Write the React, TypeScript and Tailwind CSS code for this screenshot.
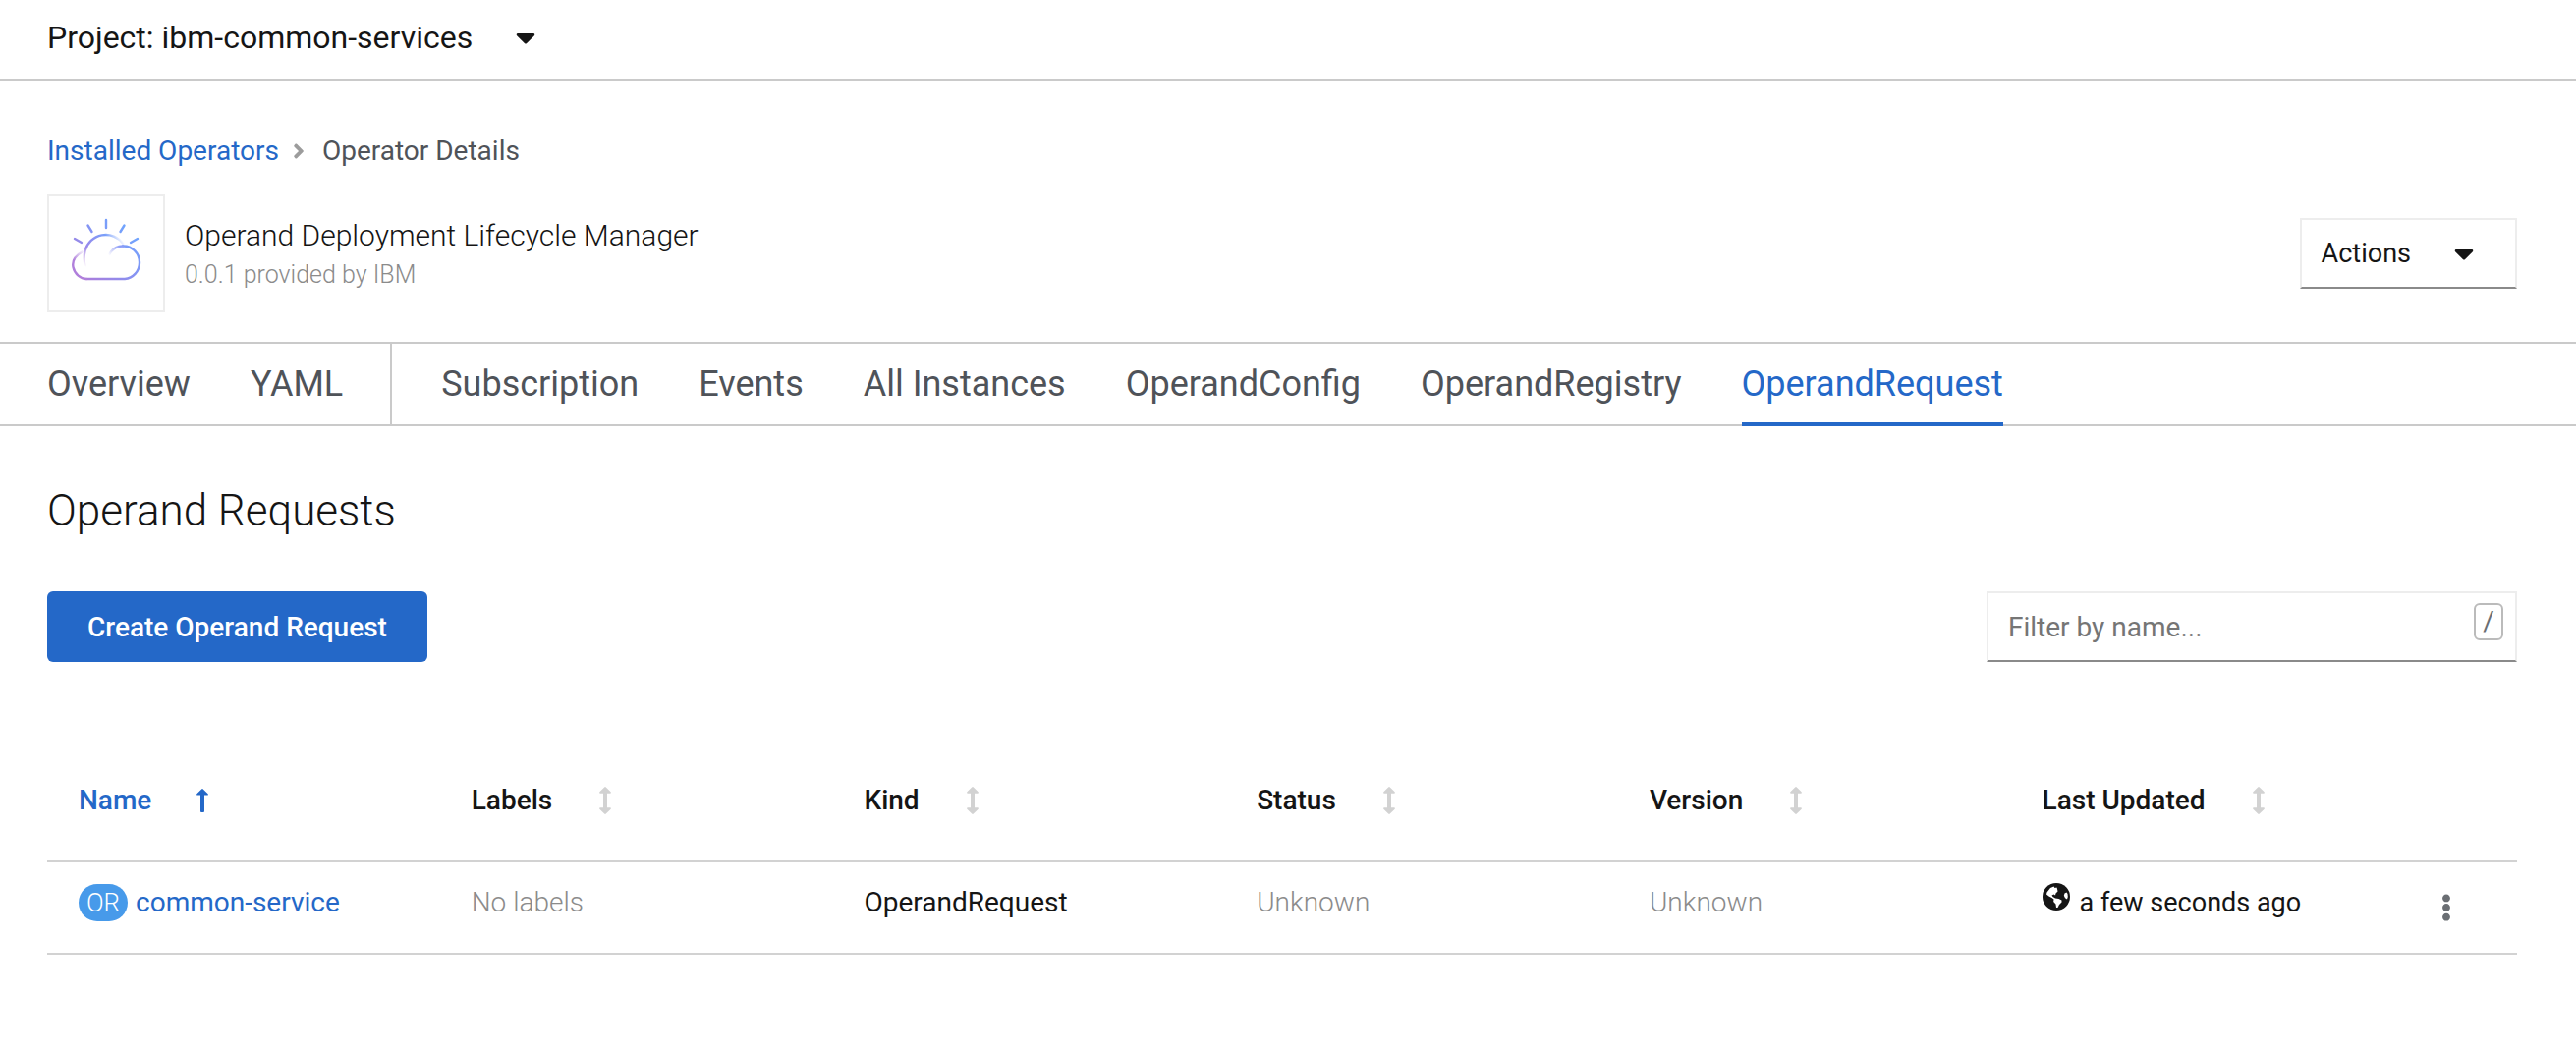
import { FaAngleRight, FaCaretDown, FaEllipsisV } from "react-icons/fa";

const primaryTabs = ["Overview", "YAML"];
const secondaryTabs = ["Subscription", "Events", "All Instances", "OperandConfig", "OperandRegistry", "OperandRequest"];
const sortableColumns = ["Labels", "Kind", "Status", "Version", "Last Updated"];

function CloudLogo() {
  return (
    <svg viewBox="0 0 72 64" className="h-16 w-18" fill="none" strokeWidth="2.4" strokeLinecap="round" aria-hidden="true">
      <defs>
        <linearGradient id="cloud" x1="8" y1="62" x2="60" y2="8" gradientUnits="userSpaceOnUse">
          <stop offset="0" stopColor="#b07ad8" />
          <stop offset="0.5" stopColor="#8a90f0" />
          <stop offset="1" stopColor="#6ea6ff" />
        </linearGradient>
        <linearGradient id="sun" x1="15" y1="50" x2="54" y2="24" gradientUnits="userSpaceOnUse">
          <stop offset="0" stopColor="#b07ad8" stopOpacity="0" />
          <stop offset="0.25" stopColor="#9a88ea" />
          <stop offset="0.75" stopColor="#7aa0fa" />
          <stop offset="1" stopColor="#7aa0fa" stopOpacity="0" />
        </linearGradient>
        <linearGradient id="front" x1="38" y1="37" x2="50" y2="28" gradientUnits="userSpaceOnUse">
          <stop offset="0" stopColor="#8a90f0" stopOpacity="0" />
          <stop offset="1" stopColor="#8a9cf8" />
        </linearGradient>
        <linearGradient id="back" x1="10" y1="34" x2="6" y2="44" gradientUnits="userSpaceOnUse">
          <stop offset="0" stopColor="#b088e0" stopOpacity="0.2" />
          <stop offset="1" stopColor="#b07fdb" />
        </linearGradient>
      </defs>
      <g stroke="url(#cloud)">
        <path d="M36 2v8M17.500 7.500l4 6.500M54.500 7.500l-4 6.500M4 21l7 4M68 21l-7 4" />
        <path d="M53 28.500A16.500 16.500 0 0 1 70 45.500A16.500 16.500 0 0 1 55 62H16" />
      </g>
      <path d="M14.500 48.500C13 43 13.500 38 14.500 33.500A22 22 0 0 1 53.500 26" stroke="url(#sun)" />
      <path d="M39 37.500C42 31.500 47 28.500 53 28.500" stroke="url(#front)" />
      <path d="M11.500 34.500C3.500 39 1.500 45 2.500 50C4 57 10 62 16 62" stroke="url(#back)" />
    </svg>
  );
}

function SortAscendingIcon() {
  return (
    <svg viewBox="0 0 12 28" className="h-7 w-3" fill="currentColor" aria-hidden="true">
      <path d="M5.200 2.400Q6 1.600 6.800 2.400L11.700 7.200Q12.300 8.500 11 8.500H8V25Q8 26 7 26H5Q4 26 4 25V8.500H1Q-.3 8.500 .3 7.200Z" />
    </svg>
  );
}

function SortIcon() {
  return (
    <svg viewBox="0 0 12 28" className="h-7 w-3 text-[#d2d2d2]" fill="currentColor" aria-hidden="true">
      <path d="M5.200 .4Q6 -.3 6.800 .4L11.700 5.200Q12.300 6.700 11 6.700H8V21.300H11Q12.300 21.300 11.700 22.800L6.800 27.600Q6 28.300 5.200 27.600L.3 22.800Q-.3 21.300 1 21.300H4V6.700H1Q-.3 6.700 .3 5.200Z" />
    </svg>
  );
}

function GlobeIcon() {
  return (
    <svg viewBox="0 0 28 28" className="size-7" aria-hidden="true">
      <circle cx="14" cy="14" r="14" fill="#151515" />
      <path
        fill="#ffffff"
        d="M11.500 3.500L8 5L4.500 9.500L4 11.500L6.500 13.500L9.500 15L11.500 16.500L11.200 19L13.500 21.500L14 25L15.500 25L17 22L19.500 19.500L19.500 17.500L16.500 16L13 15.500L10.500 14L9.500 12.500L11.500 11.500L13 12.500L13.500 10.500L15.500 8.500L15 6L14.500 4.500L12.500 5ZM24.500 9.500L22.500 10.500L21.800 12.800L23 15.200L25 16.500L25.800 14L25.500 11Z"
      />
    </svg>
  );
}

function Tab({ label, active }: { label: string; active?: boolean }) {
  return (
    <a
      href="#"
      aria-current={active ? "page" : undefined}
      className={
        active
          ? "-mb-0.5 flex items-center border-b-4 border-[#2468c8] pt-0.5 text-[#2468c8]"
          : "flex items-center text-[#4f5359]"
      }
    >
      {label}
    </a>
  );
}

export default function App() {
  return (
    <div className="bg-white font-[Roboto,sans-serif] text-[28px] leading-10 text-[#151515]">
      <header className="flex h-[82px] items-start border-b-2 border-[#cacaca] px-12 pt-[18px]">
        <button type="button" className="flex items-center gap-[38px] text-[32px]">
          <span>Project: ibm-common-services</span>
          <FaCaretDown className="size-8" />
        </button>
      </header>

      <section className="px-12 pt-[52px]">
        <nav aria-label="Breadcrumb" className="flex items-center gap-2">
          <a href="#" className="text-[#2468c8]">Installed Operators</a>
          <FaAngleRight className="size-6 text-[#9c9c9c]" />
          <span className="ml-1 text-[#4f5359]">Operator Details</span>
        </nav>

        <div className="mt-6 flex items-center justify-between pr-3 pb-[30px]">
          <div className="flex items-center gap-5">
            <div className="flex size-30 items-center justify-center border-2 border-[#ededed] pb-2">
              <CloudLogo />
            </div>
            <div className="pt-1">
              <h1 className="text-[30px] font-light">Operand Deployment Lifecycle Manager</h1>
              <p className="text-[25px] font-light text-[#8b8b8b]">0.0.1 provided by IBM</p>
            </div>
          </div>
          <button
            type="button"
            className="flex h-[72px] items-center gap-[38px] border-2 border-[#ededed] border-b-[#8a8a8a] pr-9 pl-5"
          >
            <span className="text-[27px]">Actions</span>
            <FaCaretDown className="size-8" />
          </button>
        </div>
      </section>

      <nav aria-label="Operator sections" className="flex h-[86px] border-y-2 border-[#cacaca] text-[36px]">
        <div className="flex gap-[61px] border-r-2 border-[#cacaca] pr-12 pl-12">
          {primaryTabs.map((t) => (
            <Tab key={t} label={t} />
          ))}
        </div>
        <div className="flex gap-[61px] pl-[50px]">
          {secondaryTabs.map((t) => (
            <Tab key={t} label={t} active={t === "OperandRequest"} />
          ))}
        </div>
      </nav>

      <main className="px-12 pt-[60px]">
        <h2 className="text-[44px] leading-[52px] font-light">Operand Requests</h2>

        <div className="mt-14 flex items-center justify-between pr-3">
          <button type="button" className="h-[72px] rounded-md bg-[#2468c8] px-[41px] pt-0.5 font-medium text-white">
            Create Operand Request
          </button>
          <div className="relative w-[540px]">
            <input
              type="text"
              aria-label="Filter by name"
              placeholder="Filter by name..."
              className="h-[72px] w-full border-2 border-[#ededed] border-b-[#8a8a8a] px-5 placeholder:text-[#757575]"
            />
            <kbd className="absolute top-3 right-3.5 flex h-[38px] w-[30px] items-center justify-center rounded-md border-2 border-[#bbbbbb] font-[Roboto,sans-serif] text-[#6a6e73]">
              /
            </kbd>
          </div>
        </div>

        <div className="mt-16 pr-3">
          <table className="w-full table-fixed border-collapse text-left">
            <colgroup>
              <col className="w-[15.9%]" />
              <col className="w-[15.9%]" />
              <col className="w-[15.9%]" />
              <col className="w-[15.9%]" />
              <col className="w-[15.9%]" />
              <col />
              <col className="w-36" />
            </colgroup>
            <thead>
              <tr className="h-[139px] border-b-2 border-[#d2d2d2]">
                <th scope="col" aria-sort="ascending" className="pt-4 pl-8 font-medium">
                  <button type="button" className="flex items-center gap-[46px] text-[#2468c8]">
                    Name
                    <SortAscendingIcon />
                  </button>
                </th>
                {sortableColumns.map((c) => (
                  <th key={c} scope="col" className="pt-4 pl-8 font-medium">
                    <button type="button" className="flex items-center gap-12">
                      {c}
                      <SortIcon />
                    </button>
                  </th>
                ))}
                <th aria-label="Row actions" />
              </tr>
            </thead>
            <tbody>
              <tr className="h-[94px] border-b-2 border-[#d2d2d2]">
                <td className="pb-2.5 pl-8">
                  <div className="flex items-center gap-2">
                    <span className="flex h-[38px] w-[50px] items-center justify-center rounded-full bg-[#479aea] text-[26px] font-light text-white">
                      OR
                    </span>
                    <a href="#" className="text-[#2468c8]">common-service</a>
                  </div>
                </td>
                <td className="pb-2.5 pl-8 font-light text-[#8b8b8b]">No labels</td>
                <td className="pb-2.5 pl-8">OperandRequest</td>
                <td className="pb-2.5 pl-8 font-light text-[#8b8b8b]">Unknown</td>
                <td className="pb-2.5 pl-8 font-light text-[#8b8b8b]">Unknown</td>
                <td className="pb-2.5 pl-8">
                  <div className="flex items-start gap-2.5">
                    <GlobeIcon />
                    <span className="text-[27px]">a few seconds ago</span>
                  </div>
                </td>
                <td className="pl-14">
                  <button type="button" aria-label="Actions for common-service" className="flex size-8 items-center justify-center text-[#6a6e73]">
                    <FaEllipsisV className="size-7" />
                  </button>
                </td>
              </tr>
            </tbody>
          </table>
        </div>
      </main>
    </div>
  );
}
